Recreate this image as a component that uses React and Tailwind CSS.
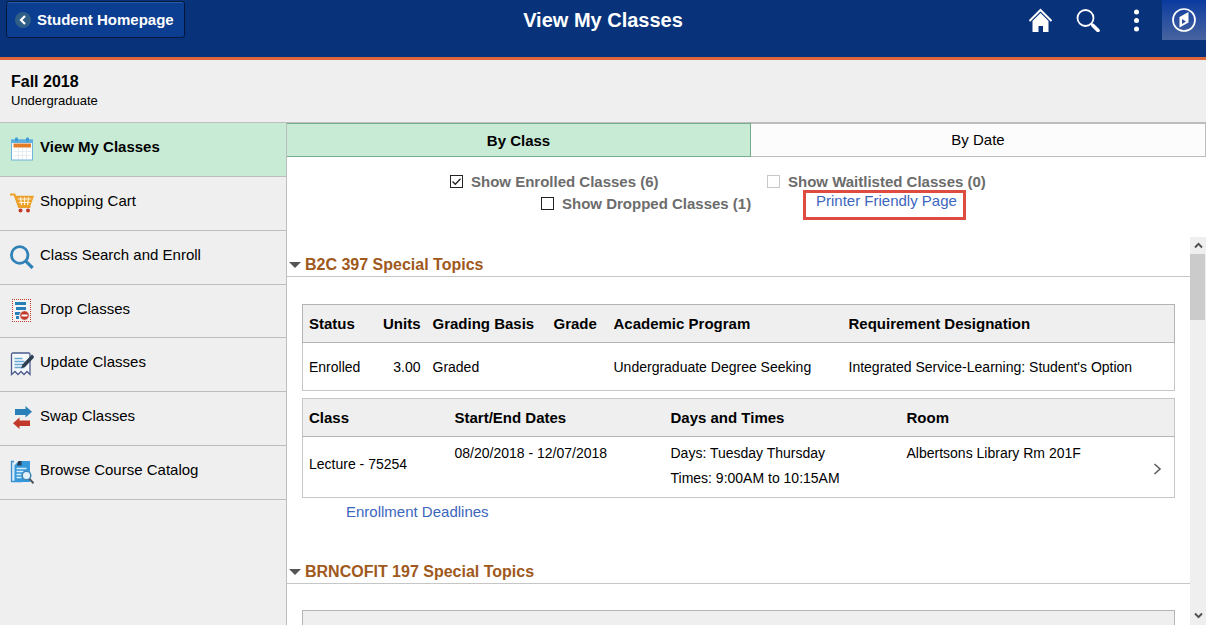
import React, { useState } from 'react';

const NAV_ITEMS = [
  { label: 'View My Classes', icon: CalendarIcon, active: true },
  { label: 'Shopping Cart', icon: CartIcon },
  { label: 'Class Search and Enroll', icon: SearchIcon },
  { label: 'Drop Classes', icon: DropIcon },
  { label: 'Update Classes', icon: UpdateIcon },
  { label: 'Swap Classes', icon: SwapIcon },
  { label: 'Browse Course Catalog', icon: CatalogIcon },
];

function CalendarIcon() {
  return (
    <svg width="24" height="24" viewBox="0 0 24 24">
      <rect x="1.5" y="3" width="21" height="20" fill="#fff" stroke="#6fb3dd" />
      <rect x="1" y="2.5" width="22" height="3.5" fill="#5cb0e0" />
      <rect x="5" y="0.5" width="3" height="4" rx="1" fill="#3c9bd3" />
      <rect x="16" y="0.5" width="3" height="4" rx="1" fill="#3c9bd3" />
      <rect x="3.5" y="6.5" width="17.5" height="4" fill="#e07b28" />
      <path d="M4 14.5h17M4 18.5h17M8.5 11v11M12.5 11v11M16.5 11v11" stroke="#e6ecef" fill="none" />
    </svg>
  );
}

function CartIcon() {
  return (
    <svg width="24" height="24" viewBox="0 0 24 24">
      <path d="M0 3.5h4.5L9 16h11.5" fill="none" stroke="#eda12a" strokeWidth="2" />
      <path d="M5.5 5.5H23L19.5 15H9z" fill="#eda12a" />
      <path d="M7.5 8H22M8.5 11.5H21M10.5 6l1 8M14.5 6v8M18.5 6l-1 8" stroke="#fdf1da" strokeWidth="1.2" fill="none" />
      <path d="M5.5 5.5H23L19.5 15H9z" fill="none" stroke="#eda12a" strokeWidth="1.5" />
      <circle cx="10.5" cy="19.5" r="2" fill="#c0392b" />
      <circle cx="18" cy="19.5" r="2" fill="#c0392b" />
    </svg>
  );
}

function SearchIcon() {
  return (
    <svg width="24" height="24" viewBox="0 0 24 24">
      <circle cx="9.7" cy="10" r="8.3" fill="none" stroke="#2f81b7" strokeWidth="2.8" />
      <path d="M15.8 16.2l6.8 6.8" stroke="#2f81b7" strokeWidth="3.2" />
    </svg>
  );
}

function DropIcon() {
  return (
    <svg width="24" height="24" viewBox="0 0 24 24">
      <rect x="2" y="0" width="19" height="23" fill="#f4f4f4" />
      <path
        d="M2 0.5h19M2 22.5h19M2.5 0v23M20.5 0v23"
        stroke="#c0392b"
        strokeDasharray="1 1"
        shapeRendering="crispEdges"
        fill="none"
      />
      <path d="M5 4.5h11M6 9.500h10M5 14.5h6M6 18.500h3" stroke="#2980b9" strokeWidth="3" fill="none" />
      <circle cx="14.5" cy="16.5" r="4.8" fill="#c0392b" stroke="#f4f4f4" />
      <path d="M11.5 16.5h6" stroke="#fff" strokeWidth="2" />
    </svg>
  );
}

function UpdateIcon() {
  return (
    <svg width="24" height="24" viewBox="0 0 24 24">
      <path d="M1.5 22.5v-20q0-1.5 1.5-1.5h15.5q1.5 0 1.5 1.5v20l-3-3-3 3-3-3-3 3-3-3z" fill="#f6f9fc" stroke="#4c5b8c" strokeWidth="1.3" />
      <path d="M4.5 6.5h8M4.5 9.5h10M4.5 12.5h8M4.5 15.5h10" stroke="#68a8d2" strokeWidth="1.4" fill="none" />
      <path d="M22.5 4.5L13.5 14" stroke="#2d3e50" strokeWidth="3.6" />
      <path d="M12.6 12.2l2.6 2.6-4.2 1.8z" fill="#2d3e50" />
      <path d="M21.5 3l2.2 2.2" stroke="#2d3e50" strokeWidth="1.5" />
    </svg>
  );
}

function SwapIcon() {
  return (
    <svg width="24" height="24" viewBox="0 0 24 24">
      <path d="M5 3h10.5V0L22 5.8l-6.5 5.7V9H5z" fill="#2980b9" />
      <path d="M20 14.500H9.5V11.5L3 17.2 9.5 23V20H20z" fill="#c0392b" />
    </svg>
  );
}

function CatalogIcon() {
  return (
    <svg width="24" height="24" viewBox="0 0 24 24">
      <path d="M4 1.5H1.5V21.5H12" fill="#d7e9f6" stroke="#3b8fd0" strokeWidth="1.3" />
      <path d="M8.5 1H20v21H4.5V5.5z" fill="#3498db" />
      <path d="M8.5 1h3v4.5H7z" fill="#2c3e50" />
      <path d="M6.5 8.5h10M6.5 11.5h7M6.5 14.5h5M6.5 17.5h5" stroke="#d8edfa" strokeWidth="1.3" fill="none" />
      <circle cx="16.5" cy="15.5" r="4.3" fill="#e4f2fb" stroke="#3e86b8" strokeWidth="1.5" />
      <path d="M19.5 18.8l4 4.5" stroke="#4a5560" strokeWidth="2" />
    </svg>
  );
}

function TopBar() {
  return (
    <header className="grid h-[60px] shrink-0 grid-cols-[1fr_auto_1fr] items-start border-b-[3px] border-[#e0663c] bg-[#08337b] text-white">
      <div className="pl-1.5 pt-px">
        <button className="flex h-[37px] items-center gap-1 rounded-[3px] border border-[#04163c] bg-[#0b3d91] pl-2 pr-2.5 text-[15px] font-bold leading-5 shadow-[inset_0_1px_0_#2a5cab]">
          <svg width="18" height="18" viewBox="0 0 18 18">
            <circle cx="8" cy="9" r="8" fill="#2f5f86" />
            <path d="M10 5L6 9l4 4" fill="none" stroke="#fff" strokeWidth="2.2" />
          </svg>
          Student Homepage
        </button>
      </div>
      <h1 className="pt-2 text-[20px] font-bold leading-6">View My Classes</h1>
      <div className="flex h-10 items-center justify-end">
        <button aria-label="Home" className="flex w-12 justify-center">
          <svg width="24" height="24" viewBox="0 0 24 24">
            <path d="M1.5 13L12.5 2l11 11" fill="none" stroke="#fff" strokeWidth="2" />
            <path d="M12.5 5l8 8v11H15v-6h-4.500v6h-6V13z" fill="#fff" />
          </svg>
        </button>
        <button aria-label="Search" className="flex w-12 justify-center">
          <svg width="24" height="24" viewBox="0 0 24 24">
            <circle cx="9.5" cy="10" r="8" fill="none" stroke="#fff" strokeWidth="1.8" />
            <path d="M15 15.5l2 2" stroke="#fff" strokeWidth="2" />
            <path d="M17 17.5l5 5" stroke="#fff" strokeWidth="3.6" strokeLinecap="round" />
          </svg>
        </button>
        <button aria-label="Actions" className="flex w-12 justify-center">
          <svg width="24" height="24" viewBox="0 0 24 24" fill="#fff">
            <circle cx="12.5" cy="4" r="2.5" />
            <circle cx="12.5" cy="12.5" r="2.5" />
            <circle cx="12.5" cy="21" r="2.5" />
          </svg>
        </button>
        <button aria-label="NavBar" className="ml-0.5 flex h-10 w-11 items-center justify-center bg-linear-to-b from-[#083a9f] to-[#47639f]">
          <svg width="24" height="24" viewBox="0 0 24 24">
            <circle cx="12" cy="12" r="11" fill="none" stroke="#fff" strokeWidth="1.7" />
            <path d="M7.5 9l9-5v10.5l-9 5z" fill="#fff" />
            <path d="M10 11v5l4-2.5z" fill="#2c4f9f" />
          </svg>
        </button>
      </div>
    </header>
  );
}

function Sidebar() {
  return (
    <div className="w-[287px] shrink-0 border-r border-[#bdbdbd] bg-[#efefef]">
      <nav className="grid h-[377px] auto-rows-fr text-[15px]">
        {NAV_ITEMS.map(({ label, icon: Icon, active }) => (
          <a
            key={label}
            href="#"
            className={`flex items-start gap-1.5 border-b border-[#bdbdbd] pl-2.5 pt-3.5 ${
              active ? 'bg-[#c8ebd6] font-bold' : ''
            }`}
          >
            <Icon />
            <span className="leading-5">{label}</span>
          </a>
        ))}
      </nav>
    </div>
  );
}

function Check({ id, label, checked, onChange, disabled }) {
  return (
    <div className="flex h-[18px] items-center gap-2">
      <span className="relative flex">
        <input
          id={id}
          type="checkbox"
          checked={checked}
          onChange={onChange}
          disabled={disabled}
          className="size-[13px] appearance-none border border-[#222] bg-white disabled:border-[#c8c8c8]"
        />
        {checked && (
          <svg className="pointer-events-none absolute inset-0" width="13" height="13" viewBox="0 0 13 13">
            <path d="M2.5 6.5l2.8 2.8 5.2-5.6" fill="none" stroke="#222" strokeWidth="1.3" />
          </svg>
        )}
      </span>
      <label htmlFor={id} className="pt-0.5 text-[15px] font-bold leading-[18px] text-[#6c6c6c]">
        {label}
      </label>
    </div>
  );
}

function Filters() {
  const [enrolled, setEnrolled] = useState(true);
  const [dropped, setDropped] = useState(false);

  return (
    <div className="grid h-20 shrink-0 grid-cols-[317px_auto] justify-start pl-[163px] pt-[15px]">
      <div className="flex flex-col gap-1">
        <Check id="enrolled" label="Show Enrolled Classes (6)" checked={enrolled} onChange={(e) => setEnrolled(e.target.checked)} />
        <div className="pl-[91px]">
          <Check id="dropped" label="Show Dropped Classes (1)" checked={dropped} onChange={(e) => setDropped(e.target.checked)} />
        </div>
      </div>
      <div>
        <Check id="waitlisted" label="Show Waitlisted Classes (0)" checked={false} disabled />
        <div className="pl-9">
          <a href="#" className="block h-[30px] w-fit border-[3px] border-[#dd4b41] pl-2.5 pr-1.5 text-[15px] leading-4 text-[#3b66bd]">
            Printer Friendly Page
          </a>
        </div>
      </div>
    </div>
  );
}

function SectionTitle({ children }) {
  return (
    <h2 className="flex h-10 items-end border-b border-[#c6c6c6] pb-px pl-0.5 text-[16px] font-bold leading-5 text-[#a0591c]">
      <button className="flex items-center gap-1">
        <svg width="12" height="6" viewBox="0 0 12 6">
          <path d="M0 0h12L6 6z" fill="#555" />
        </svg>
        {children}
      </button>
    </h2>
  );
}

function StatusTable() {
  return (
    <table className="w-full table-fixed border border-[#c6c6c6] text-left text-[14px]">
      <colgroup>
        <col className="w-[69px]" />
        <col className="w-[55px]" />
        <col className="w-[121px]" />
        <col className="w-[60px]" />
        <col className="w-[235px]" />
        <col />
      </colgroup>
      <thead className="border border-[#b4b4b4] bg-[#efefef] text-[15px]">
        <tr className="h-[38px]">
          <th className="px-1.5 pt-0.5">Status</th>
          <th className="px-1.5 pt-0.5 text-right">Units</th>
          <th className="px-1.5 pt-0.5">Grading Basis</th>
          <th className="px-1.5 pt-0.5">Grade</th>
          <th className="px-1.5 pt-0.5">Academic Program</th>
          <th className="px-1.5 pt-0.5">Requirement Designation</th>
        </tr>
      </thead>
      <tbody>
        <tr className="h-12">
          <td className="px-1.5 pt-0.5">Enrolled</td>
          <td className="px-1.5 pt-0.5 text-right">3.00</td>
          <td className="px-1.5 pt-0.5">Graded</td>
          <td className="px-1.5 pt-0.5"></td>
          <td className="px-1.5 pt-0.5">Undergraduate Degree Seeking</td>
          <td className="px-1.5 pt-0.5">Integrated Service-Learning: Student's Option</td>
        </tr>
      </tbody>
    </table>
  );
}

function ScheduleTable() {
  return (
    <table className="w-full table-fixed border border-[#c6c6c6] text-left text-[14px]">
      <colgroup>
        <col className="w-[146px]" />
        <col className="w-[216px]" />
        <col className="w-[236px]" />
        <col />
        <col className="w-[34px]" />
      </colgroup>
      <thead className="border-b border-[#b4b4b4] bg-[#efefef] text-[15px]">
        <tr className="h-[38px]">
          <th className="px-1.5 pt-0.5">Class</th>
          <th className="px-1.5 pt-0.5">Start/End Dates</th>
          <th className="px-1.5 pt-0.5">Days and Times</th>
          <th className="px-1.5 pt-0.5">Room</th>
          <td></td>
        </tr>
      </thead>
      <tbody>
        <tr className="h-[61px] align-top leading-[25px]">
          <td className="px-1.5 pt-[15px]">Lecture - 75254</td>
          <td className="px-1.5 pt-1">08/20/2018 - 12/07/2018</td>
          <td className="px-1.5 pt-1">
            Days: Tuesday Thursday
            <br />
            Times: 9:00AM to 10:15AM
          </td>
          <td className="px-1.5 pt-1">Albertsons Library Rm 201F</td>
          <td className="pl-3 pt-[26px]">
            <button aria-label="Class details" className="block">
              <svg width="9" height="12" viewBox="0 0 9 12">
                <path d="M1.5 1L7 6l-5.500 5" fill="none" stroke="#5f5f5f" strokeWidth="1.6" />
              </svg>
            </button>
          </td>
        </tr>
      </tbody>
    </table>
  );
}

function ScrollRail() {
  return (
    <div className="flex w-4 shrink-0 flex-col bg-[#efefef]">
      <button aria-label="Scroll up" className="flex h-[17px] items-center justify-center">
        <svg width="9" height="7" viewBox="0 0 9 7">
          <path d="M1 5.5l3.5-3.7L8 5.5" fill="none" stroke="#505050" strokeWidth="1.9" />
        </svg>
      </button>
      <div className="h-[66px] w-[15px] bg-[#cbcbcb]" />
      <button aria-label="Scroll down" className="mt-auto flex h-5 items-center justify-center">
        <svg width="9" height="7" viewBox="0 0 9 7">
          <path d="M1 1.5l3.5 3.7L8 1.5" fill="none" stroke="#505050" strokeWidth="1.9" />
        </svg>
      </button>
    </div>
  );
}

export default function App() {
  return (
    <div className="flex h-screen flex-col overflow-hidden bg-white font-['Liberation_Sans',Arial,sans-serif] text-black">
      <TopBar />

      {/* Term */}
      <div className="h-[63px] shrink-0 border-b border-[#bdbdbd] bg-[#efefef] pl-[11px] pt-3">
        <p className="text-[16px] font-bold leading-5">Fall 2018</p>
        <p className="text-[13px] leading-[18px]">Undergraduate</p>
      </div>

      <div className="flex min-h-0 flex-1">
        <Sidebar />

        <main className="flex min-w-0 flex-1 flex-col">
          <div className="flex h-[34px] shrink-0 text-[15px]" role="tablist">
            <button
              role="tab"
              aria-selected="true"
              className="w-[464px] border-y border-r border-[#73ad8d] bg-[#c8ebd6] pt-0.5 font-bold"
            >
              By Class
            </button>
            <button role="tab" aria-selected="false" className="flex-1 border-y border-r border-[#bdbdbd] bg-[#fcfcfc]">
              By Date
            </button>
          </div>

          <Filters />

          <div className="flex min-h-0 flex-1">
            <div className="min-w-0 flex-1 overflow-hidden">
              <SectionTitle>B2C 397 Special Topics</SectionTitle>
              <div className="flex flex-col gap-[7px] px-[15px] pt-[27px]">
                <StatusTable />
                <ScheduleTable />
              </div>
              <div className="h-[46px] pl-[59px] pt-1">
                <a href="#" className="block w-fit text-[15px] leading-5 text-[#3b66bd]">Enrollment Deadlines</a>
              </div>

              <SectionTitle>BRNCOFIT 197 Special Topics</SectionTitle>
              <div className="px-[15px] pt-[26px]">
                <div className="h-10 border border-[#b4b4b4] bg-[#efefef]" />
              </div>
            </div>
            <ScrollRail />
          </div>
        </main>
      </div>
    </div>
  );
}
